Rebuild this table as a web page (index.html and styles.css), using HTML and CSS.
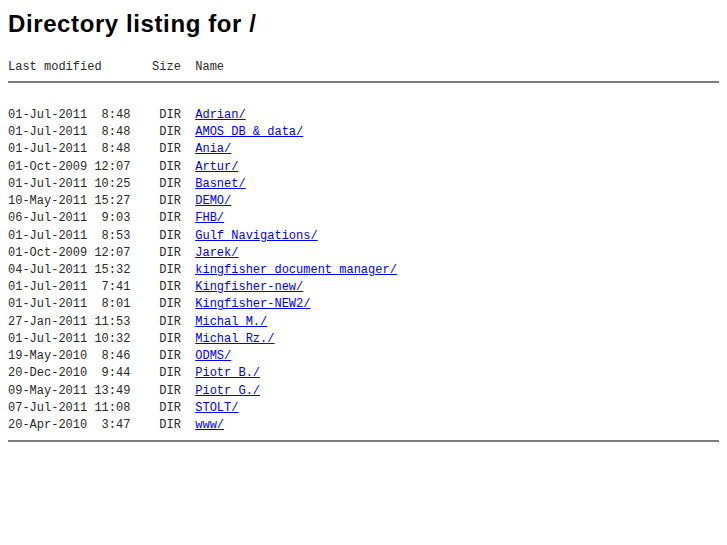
FILE: index.html
```html
<!DOCTYPE html>
<html>
<head>
<meta charset="utf-8">
<title>Directory listing for /</title>
<link rel="stylesheet" href="styles.css">
</head>
<body>
<h1 class="title">Directory listing for /</h1>
<pre class="listing head">Last modified       Size  Name</pre>
<hr class="rule">
<pre class="listing rows">01-Jul-2011  8:48    DIR  <a href="#">Adrian/</a>
01-Jul-2011  8:48    DIR  <a href="#">AMOS DB &amp; data/</a>
01-Jul-2011  8:48    DIR  <a href="#">Ania/</a>
01-Oct-2009 12:07    DIR  <a href="#">Artur/</a>
01-Jul-2011 10:25    DIR  <a href="#">Basnet/</a>
10-May-2011 15:27    DIR  <a href="#">DEMO/</a>
06-Jul-2011  9:03    DIR  <a href="#">FHB/</a>
01-Jul-2011  8:53    DIR  <a href="#">Gulf Navigations/</a>
01-Oct-2009 12:07    DIR  <a href="#">Jarek/</a>
04-Jul-2011 15:32    DIR  <a href="#">kingfisher document manager/</a>
01-Jul-2011  7:41    DIR  <a href="#">Kingfisher-new/</a>
01-Jul-2011  8:01    DIR  <a href="#">Kingfisher-NEW2/</a>
27-Jan-2011 11:53    DIR  <a href="#">Michal M./</a>
01-Jul-2011 10:32    DIR  <a href="#">Michal Rz./</a>
19-May-2010  8:46    DIR  <a href="#">ODMS/</a>
20-Dec-2010  9:44    DIR  <a href="#">Piotr B./</a>
09-May-2011 13:49    DIR  <a href="#">Piotr G./</a>
07-Jul-2011 11:08    DIR  <a href="#">STOLT/</a>
20-Apr-2010  3:47    DIR  <a href="#">www/</a></pre>
<hr class="rule">
</body>
</html>
```
FILE: styles.css
```css
html, body {
  background: #ffffff;
}
body {
  margin: 8px;
  color: #000000;
}
.title {
  font-family: "Liberation Sans", Arial, sans-serif;
  font-size: 24px;
  font-weight: bold;
  letter-spacing: 0.6px;
  margin: 2px 0 21px 0;
}
.listing {
  font-family: "Liberation Mono", "Courier New", monospace;
  font-size: 12px;
  line-height: 17px;
  margin: 0;
  color: #2a2a2a;
}
.listing a {
  color: #0000ee;
  text-decoration: underline;
}
.rows {
  line-height: 17.22px;
  margin-top: 24px;
}
.rule {
  height: 0;
  border: 0;
  border-top: 2px solid #7c7c7c;
  margin: 5px 0 6px 0;
}
.rows + .rule {
  margin-top: 6px;
}
```
